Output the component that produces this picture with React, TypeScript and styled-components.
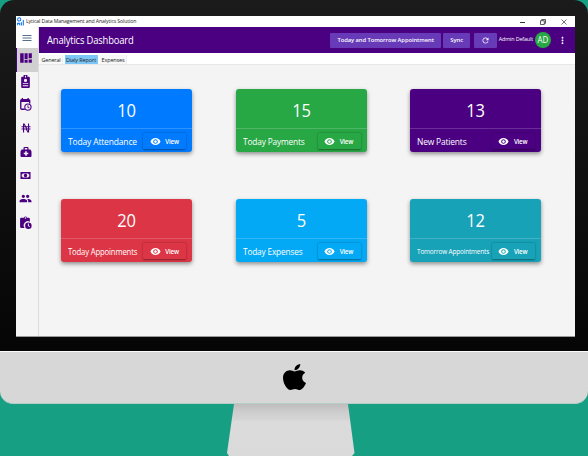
import React from "react";
import styled, { createGlobalStyle } from "styled-components";
import { MdMenu, MdRefresh, MdMoreVert, MdPeople, MdVisibility } from "react-icons/md";

const GlobalStyle = createGlobalStyle`
  * { box-sizing: border-box; }
  body { margin: 0; background: #179f83; font-family: "Open Sans", "Noto Sans", sans-serif; overflow: hidden; }
  svg { display: block; flex: none; }
`;

const Scene = styled.main`
  width: 588px; height: 456px; background: #179f83;
  display: flex; flex-direction: column; overflow: hidden;
`;
const Bezel = styled.div`
  height: 351px; padding: 16px 13px 14px 16px; flex: none;
  border-radius: 14px 14px 0 0; background: linear-gradient(#1b1b1b, #050505);
`;
const Screen = styled.div`
  height: 321px; width: 559px; background: #f4f4f4;
  display: flex; flex-direction: column; border-bottom: 1px solid #999;
`;
const TitleBar = styled.div`
  height: 11px; background: #fff; display: flex; align-items: center; flex: none;
  padding: 0 8px 0 1px; gap: 1.5px; color: #222;
`;
const Text = styled.span<{ $size: number; $track?: number; $weight?: number; $squeeze?: number; $origin?: string }>`
  font-size: ${(p) => p.$size}px; letter-spacing: ${(p) => p.$track ?? 0}px;
  font-weight: ${(p) => p.$weight ?? 400}; line-height: 1; white-space: nowrap;
  display: inline-block; transform: scaleX(${(p) => p.$squeeze ?? 1});
  transform-origin: ${(p) => p.$origin ?? "left"} center;
`;
const WindowControls = styled.div`
  margin-left: auto; display: flex; align-items: center; gap: 15px;
`;
const Workspace = styled.div` flex: 1; display: flex; min-height: 0; `;
const Sidebar = styled.nav`
  width: 23px; flex: none; border-right: 1px solid #ddd; background: #f4f4f4;
  display: flex; flex-direction: column;
`;
const MenuCell = styled.div`
  height: 21px; background: #fff; color: #56718c; padding-left: 5px;
  display: flex; align-items: center;
`;
const NavItem = styled.div<{ $active?: boolean }>`
  height: 23.5px; flex: none; display: flex; align-items: center; justify-content: center;
  padding: 0 4px 4px 0;
  color: #4b0082; border-left: 1px solid ${(p) => (p.$active ? "#4b0082" : "transparent")};
  background: ${(p) => (p.$active ? "#d0d0d0" : "transparent")};
`;
const Main = styled.section` flex: 1; min-width: 0; display: flex; flex-direction: column; `;
const Header = styled.header`
  height: 26px; flex: none; background: #4b0082; color: #fff;
  display: flex; align-items: center; padding: 0 7px 0 8px;
`;
const Actions = styled.div` margin-left: auto; display: flex; align-items: center; flex: none; `;
const ActionButton = styled.div<{ $width: number; $gap?: number }>`
  width: ${(p) => p.$width}px; height: 15px; margin-right: ${(p) => p.$gap ?? 2}px; padding-top: 1px;
  background: #673ab7; border-radius: 1px; display: flex; align-items: center; justify-content: center;
`;
const Avatar = styled.div`
  width: 16px; height: 16px; border-radius: 50%; background: #28a745; margin: 0 6.5px 0 1.5px;
  display: flex; align-items: center; justify-content: center; flex: none;
`;
const Tabs = styled.div`
  height: 12px; flex: none; display: flex; align-items: flex-end; gap: 2px; padding: 0 0 0 1px;
  background: #fff; border-bottom: 1px solid #e8e8e8;
`;
const Tab = styled.div<{ $active?: boolean; $width: number }>`
  width: ${(p) => p.$width}px; height: 9px; display: flex; align-items: center; justify-content: center;
  padding-top: 2px;
  background: ${(p) => (p.$active ? "#7cc7f7" : "#f8f8f8")}; color: #222;
  border-right: 1px solid ${(p) => (p.$active ? "#7cc7f7" : "#eee")};
`;
const CardGrid = styled.div`
  display: grid; grid-template-columns: repeat(3, 131px); column-gap: 43.3px; row-gap: 47px;
  padding: 24.4px 0 0 22.3px;
`;
const Card = styled.article<{ $color: string }>`
  height: 63px; border-radius: 3px; background: ${(p) => p.$color}; color: #fff;
  box-shadow: 0 2px 4px rgba(0, 0, 0, 0.42); display: flex; flex-direction: column;
`;
const CardValue = styled.div`
  height: 39px; display: flex; align-items: center; justify-content: center; padding-top: 4px;
`;
const CardFooter = styled.div`
  flex: 1; border-top: 1px solid rgba(255, 255, 255, 0.18); padding: 1px 6px 0 7px;
  display: grid; grid-template-columns: 75px 43px; align-items: center;
`;
const ViewButton = styled.div<{ $color: string }>`
  width: 43px; height: 16px; border-radius: 1px; background: ${(p) => p.$color};
  box-shadow: 0 0.5px 2px rgba(0, 0, 0, 0.42);
  display: flex; align-items: center; justify-content: center; gap: 4.5px; padding: 1px 1px 0 0;
`;
const Chin = styled.div`
  height: 53px; flex: none; border-top: 1px solid #fafafa; border-bottom: 1px solid #b5cec6;
  border-radius: 0 0 13px 13px; background: #d7d7d7;
  display: flex; align-items: flex-start; justify-content: center; padding-top: 12px;
`;
const Stand = styled.div`
  width: 129px; height: 52px; margin-left: 227px; flex: none;
  clip-path: polygon(7px 0, 121px 0, 127.5px 49px, 125px 52px, 2px 52px, 0 49px);
  background: linear-gradient(#bebcbc 0, #cecdcd 8px, #d5d5d5 16px, #dbdbdb 17px, #dadada 52px);
`;

const Glyph = ({ d, size = 13 }: { d: string; size?: number }) => (
  <svg width={size} height={size} viewBox="0 0 24 24" fill="currentColor" fillRule="evenodd"><path d={d} /></svg>
);

const dashboard = "M2 4h6v16H2zM9.5 4h5.3v9.5H9.5zM9.5 15h5.3v5H9.5zM16.5 4H22v8.5h-5.5zM16.5 14.5H22V20h-5.5z";
const clipboard = "M18 3h-2.5V0h-7v3H6a2 2 0 0 0-2 2v17a2 2 0 0 0 2 2h12a2 2 0 0 0 2-2V5a2 2 0 0 0-2-2zM11 1.6h2v3.2h-2zM12 7a3 3 0 1 1 0 6 3 3 0 0 1 0-6zM7 15h10v1.8H7zM7 19h10v1.8H7z";
const scheduleBody = "M5 22a3 3 0 0 1-3-3V5c0-1.6 1.3-3 3-3V0h2.5v2h8V0H18v2c1.7 0 3 1.4 3 3v5h-2.5V7.5h-14V19c0 .3.2.5.5.5h4.7l1.6 2.5H5z";
const scheduleClock = "M16.5 10a6.8 6.8 0 1 1 0 13.6 6.8 6.8 0 0 1 0-13.6zm0 2a4.8 4.8 0 1 0 0 9.6 4.8 4.8 0 0 0 0-9.6zm-.8 1.5h1.6v3l2.3 1.4-.8 1.4-3.1-1.9v-3.9z";
const naira = "M4 8.5h2V3h3l3 5.5h4V3h2.2v5.5H21v2h-2.8v2.3H21v2h-2.8V21h-3l-3.6-6.2H8.2V21H6v-6.2H3v-2h3v-2.3H3v-2h1zm4.2 0h1.5L8.2 6v2.5zm0 2v2.3H12l-1.2-2.3H8.2zm5.1 0 1.2 2.3H16v-2.3h-2.7zm.8 4.3 1.9 3.3v-3.3h-1.9z";
const medical = "M21 7h-4V4a2 2 0 0 0-2-2H9a2 2 0 0 0-2 2v3H3L1 11v9a2 2 0 0 0 2 2h18a2 2 0 0 0 2-2v-9l-2-4zM9.5 4h5v3h-5V4zm1 6.5h3v3h3v3h-3v3h-3v-3h-3v-3h3v-3z";
const money = "M1 4.5h22v15H1V4.5zm5 3a2.5 2.5 0 0 1-2.2 2.2v4.6A2.5 2.5 0 0 1 6 16.5h12a2.5 2.5 0 0 1 2.2-2.2V9.7A2.5 2.5 0 0 1 18 7.5H6zM12 8.2a3.8 3.8 0 1 1 0 7.6 3.8 3.8 0 0 1 0-7.6z";
const pendingSheet = "M18 3h-3.2a3 3 0 0 0-5.6 0H4a2 2 0 0 0-2 2v15c0 1.1.9 2 2 2h6.4a7.6 7.6 0 0 1 9.6-11.4V5a2 2 0 0 0-2-2zm-6-.6a1.4 1.4 0 1 1 0 2.8 1.4 1.4 0 0 1 0-2.8z";
const pendingClock = "M17.3 11.8a6 6 0 1 1 0 12 6 6 0 0 1 0-12zm-.9 2.2v4.4l2.9 2.1 1-1.3-2.2-1.6V14h-1.7z";
const apple = "M318.7 268.7c-.2-36.7 16.4-64.4 50-84.8-18.8-26.9-47.2-41.7-84.7-44.6-35.5-2.8-74.3 20.7-88.5 20.7-15 0-49.4-19.7-76.4-19.7C63.3 141.2 4 184.8 4 273.5q0 39.3 14.4 81.2c12.8 36.7 59 126.7 107.2 125.2 25.2-.6 43-17.9 75.8-17.9 31.8 0 48.3 17.9 76.4 17.9 48.6-.7 90.4-82.5 102.6-119.3-65.2-30.7-61.7-90-61.7-91.9zm-56.6-164.2c27.3-32.4 24.8-61.9 24-72.5-24.1 1.4-52 16.4-67.9 34.9-17.5 19.8-27.8 44.3-25.6 71.9 26.1 2 49.9-11.4 69.5-34.3z";

const cards = [
  { value: "10", label: "Today Attendance", color: "#007bff", size: 9, squeeze: 0.945 },
  { value: "15", label: "Today Payments", color: "#28a745", size: 9, squeeze: 0.925 },
  { value: "13", label: "New Patients", color: "#4b0082", size: 9, squeeze: 0.935 },
  { value: "20", label: "Today Appoinments", color: "#dc3545", size: 9, squeeze: 0.855 },
  { value: "5", label: "Today Expenses", color: "#03a9f4", size: 9, squeeze: 0.92 },
  { value: "12", label: "Tomorrow Appointments", color: "#17a2b8", size: 7.3, squeeze: 0.88 },
];

export default function App() {
  return (
    <Scene>
      <GlobalStyle />
      <Bezel>
        <Screen>
          <TitleBar>
            <svg width="7" height="9" viewBox="0 0 7 9" fill="none" stroke="#1778ed" strokeWidth="1.1">
              <circle cx="2.2" cy="2.4" r="1.6" /><path d="M.6 8.3V6.4h2v1.9M4.4 5.2v3.3M6.3 3v5.5" />
            </svg>
            <Text $size={5.9} $track={-0.12} $squeeze={0.875}>Lytical Data Management and Analytics Solution</Text>
            <WindowControls>
              <svg width="5" height="6" stroke="#333"><path d="M0 3.5h5" /></svg>
              <svg width="6" height="6" fill="none" stroke="#333" strokeWidth=".8"><path d="M.5 1.7h3.8v3.8H.5zM1.7 1.7V.5h3.8v3.8H4.3" /></svg>
              <svg width="6" height="6" stroke="#333" strokeWidth=".7"><path d="m.5.5 5 5m0-5-5 5" /></svg>
            </WindowControls>
          </TitleBar>
          <Workspace>
            <Sidebar>
              <MenuCell><MdMenu size={12} /></MenuCell>
              <NavItem $active><Glyph d={dashboard} size={14} /></NavItem>
              <NavItem><Glyph d={clipboard} size={13} /></NavItem>
              <NavItem><Glyph d={scheduleBody + scheduleClock} size={13} /></NavItem>
              <NavItem><Glyph d={naira} size={12} /></NavItem>
              <NavItem><Glyph d={medical} size={12} /></NavItem>
              <NavItem><Glyph d={money} size={11} /></NavItem>
              <NavItem><MdPeople size={13} /></NavItem>
              <NavItem><Glyph d={pendingSheet + pendingClock} size={13} /></NavItem>
            </Sidebar>
            <Main>
              <Header>
                <Text $size={10.8} $track={-0.18} $squeeze={0.87}>Analytics Dashboard</Text>
                <Actions>
                  <ActionButton $width={111}><Text $size={5.8} $track={-0.06} $weight={600}>Today and Tomorrow Appointment</Text></ActionButton>
                  <ActionButton $width={27} $gap={4}><Text $size={5.9} $weight={600}>Sync</Text></ActionButton>
                  <ActionButton $width={23} $gap={1.5}><MdRefresh size={9} /></ActionButton>
                  <Text $size={5.4} $track={-0.14}>Admin Default</Text>
                  <Avatar><Text $size={8.5} $squeeze={0.93} $origin="center">AD</Text></Avatar>
                  <MdMoreVert size={11} />
                </Actions>
              </Header>
              <Tabs>
                <Tab $width={23}><Text $size={5.5} $track={-0.15}>General</Text></Tab>
                <Tab $width={33} $active><Text $size={5.5} $track={-0.1}>Dialy Report</Text></Tab>
                <Tab $width={27}><Text $size={5.5} $track={-0.15}>Expenses</Text></Tab>
              </Tabs>
              <CardGrid>
                {cards.map((card) => (
                  <Card key={card.label} $color={card.color}>
                    <CardValue>
                      <Text $size={19} $track={-0.3} $squeeze={0.87} $origin="center">{card.value}</Text>
                    </CardValue>
                    <CardFooter>
                      <Text $size={card.size} $track={-0.18} $squeeze={card.squeeze}>{card.label}</Text>
                      <ViewButton $color={card.color}>
                        <MdVisibility size={11} />
                        <Text $size={6.2} $weight={600} $track={-0.2}>View</Text>
                      </ViewButton>
                    </CardFooter>
                  </Card>
                ))}
              </CardGrid>
            </Main>
          </Workspace>
        </Screen>
      </Bezel>
      <Chin>
        <svg width="23" height="26" viewBox="4 32 377 448" preserveAspectRatio="none"><path d={apple} /></svg>
      </Chin>
      <Stand />
    </Scene>
  );
}
